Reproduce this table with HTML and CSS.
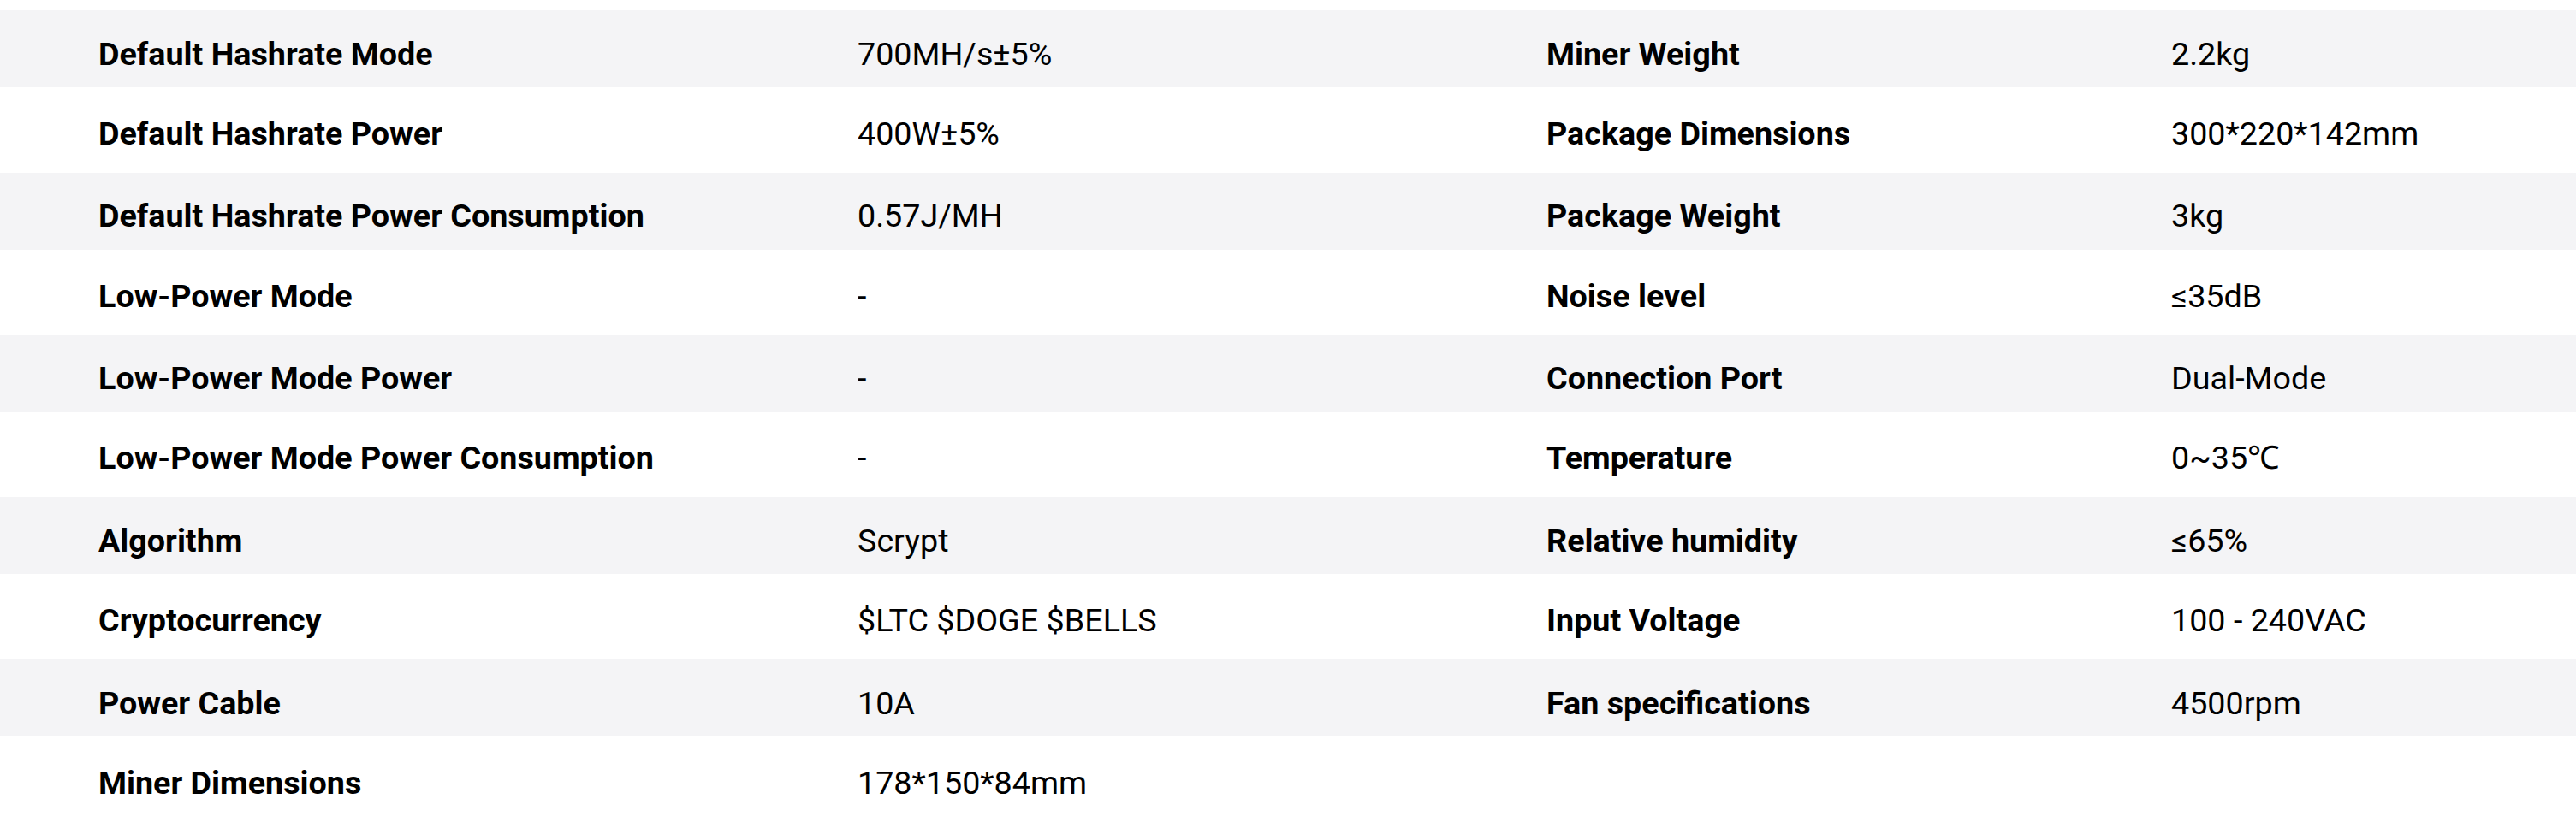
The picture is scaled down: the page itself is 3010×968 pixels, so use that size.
FILE: index.html
```html
<!DOCTYPE html>
<html lang="en">
<head>
<meta charset="utf-8">
<title>Specifications</title>
<link rel="stylesheet" href="styles.css">
</head>
<body>
<div class="specs">
  <div class="row alt"><div class="label">Default Hashrate Mode</div><div class="value">700MH/s±5%</div><div class="label">Miner Weight</div><div class="value">2.2kg</div></div>
  <div class="row"><div class="label">Default Hashrate Power</div><div class="value">400W±5%</div><div class="label">Package Dimensions</div><div class="value">300*220*142mm</div></div>
  <div class="row alt"><div class="label">Default Hashrate Power Consumption</div><div class="value">0.57J/MH</div><div class="label">Package Weight</div><div class="value">3kg</div></div>
  <div class="row"><div class="label">Low-Power Mode</div><div class="value">-</div><div class="label">Noise level</div><div class="value">≤35dB</div></div>
  <div class="row alt"><div class="label">Low-Power Mode Power</div><div class="value">-</div><div class="label">Connection Port</div><div class="value">Dual-Mode</div></div>
  <div class="row"><div class="label">Low-Power Mode Power Consumption</div><div class="value">-</div><div class="label">Temperature</div><div class="value">0~35℃</div></div>
  <div class="row alt"><div class="label">Algorithm</div><div class="value">Scrypt</div><div class="label">Relative humidity</div><div class="value">≤65%</div></div>
  <div class="row"><div class="label">Cryptocurrency</div><div class="value">$LTC $DOGE $BELLS</div><div class="label">Input Voltage</div><div class="value">100 - 240VAC</div></div>
  <div class="row alt"><div class="label">Power Cable</div><div class="value">10A</div><div class="label">Fan specifications</div><div class="value">4500rpm</div></div>
  <div class="row"><div class="label">Miner Dimensions</div><div class="value">178*150*84mm</div><div class="label"></div><div class="value"></div></div>
</div>
</body>
</html>
```

FILE: styles.css
```css
html, body {
  margin: 0;
  padding: 0;
  background: #ffffff;
}

body {
  font-family: Roboto, "Liberation Sans", Arial, sans-serif;
  color: #000000;
  overflow: hidden;
}

.specs {
  padding-top: 12px;
  display: flex;
  flex-direction: column;
}

.row {
  display: grid;
  grid-template-columns: 887px 805px 730px 1fr;
  align-items: center;
  box-sizing: border-box;
  height: 99.75px;
  padding: 8px 0 0 115px;
  font-size: 37.7px;
  line-height: 38px;
  background: #ffffff;
}

.row.alt {
  height: 90px;
  padding-top: 11px;
  background: #f4f4f6;
}

.label {
  font-weight: 700;
  white-space: nowrap;
}

.value {
  font-weight: 400;
  white-space: nowrap;
}
```
